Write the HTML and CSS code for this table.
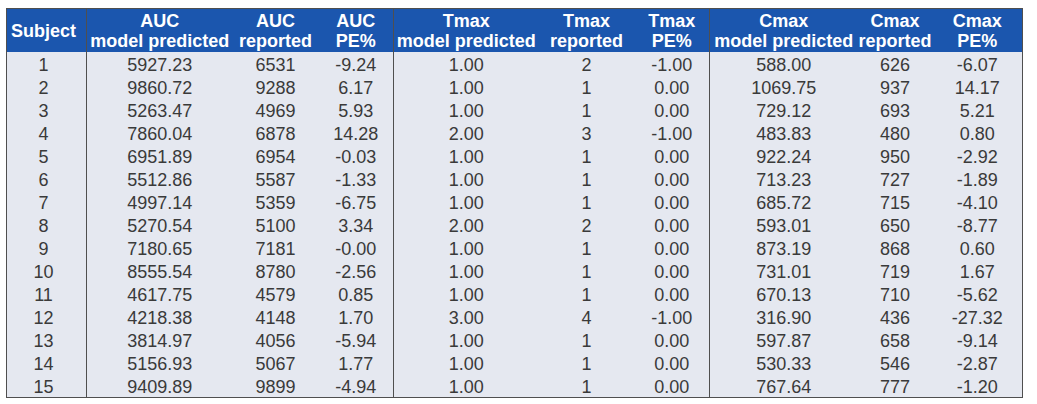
FILE: index.html
```html
<!DOCTYPE html>
<html>
<head>
<meta charset="utf-8">
<link rel="stylesheet" href="styles.css">
</head>
<body>
<table class="pk">
  <colgroup>
    <col class="c-subj">
    <col class="c-pred1">
    <col class="c-rep1">
    <col class="c-pe1">
    <col class="c-pred2">
    <col class="c-rep2">
    <col class="c-pe2">
    <col class="c-pred3">
    <col class="c-rep3">
    <col class="c-pe3">
  </colgroup>
  <thead>
    <tr>
      <th class="subj sep">Subject</th>
      <th>AUC<br>model predicted</th>
      <th>AUC<br>reported</th>
      <th class="sep">AUC<br>PE%</th>
      <th>Tmax<br>model predicted</th>
      <th>Tmax<br>reported</th>
      <th class="sep">Tmax<br>PE%</th>
      <th>Cmax<br>model predicted</th>
      <th>Cmax<br>reported</th>
      <th>Cmax<br>PE%</th>
    </tr>
  </thead>
  <tbody>
    <tr><td class="subj sep">1</td><td>5927.23</td><td>6531</td><td class="sep">-9.24</td><td>1.00</td><td>2</td><td class="sep">-1.00</td><td>588.00</td><td>626</td><td>-6.07</td></tr>
    <tr><td class="subj sep">2</td><td>9860.72</td><td>9288</td><td class="sep">6.17</td><td>1.00</td><td>1</td><td class="sep">0.00</td><td>1069.75</td><td>937</td><td>14.17</td></tr>
    <tr><td class="subj sep">3</td><td>5263.47</td><td>4969</td><td class="sep">5.93</td><td>1.00</td><td>1</td><td class="sep">0.00</td><td>729.12</td><td>693</td><td>5.21</td></tr>
    <tr><td class="subj sep">4</td><td>7860.04</td><td>6878</td><td class="sep">14.28</td><td>2.00</td><td>3</td><td class="sep">-1.00</td><td>483.83</td><td>480</td><td>0.80</td></tr>
    <tr><td class="subj sep">5</td><td>6951.89</td><td>6954</td><td class="sep">-0.03</td><td>1.00</td><td>1</td><td class="sep">0.00</td><td>922.24</td><td>950</td><td>-2.92</td></tr>
    <tr><td class="subj sep">6</td><td>5512.86</td><td>5587</td><td class="sep">-1.33</td><td>1.00</td><td>1</td><td class="sep">0.00</td><td>713.23</td><td>727</td><td>-1.89</td></tr>
    <tr><td class="subj sep">7</td><td>4997.14</td><td>5359</td><td class="sep">-6.75</td><td>1.00</td><td>1</td><td class="sep">0.00</td><td>685.72</td><td>715</td><td>-4.10</td></tr>
    <tr><td class="subj sep">8</td><td>5270.54</td><td>5100</td><td class="sep">3.34</td><td>2.00</td><td>2</td><td class="sep">0.00</td><td>593.01</td><td>650</td><td>-8.77</td></tr>
    <tr><td class="subj sep">9</td><td>7180.65</td><td>7181</td><td class="sep">-0.00</td><td>1.00</td><td>1</td><td class="sep">0.00</td><td>873.19</td><td>868</td><td>0.60</td></tr>
    <tr><td class="subj sep">10</td><td>8555.54</td><td>8780</td><td class="sep">-2.56</td><td>1.00</td><td>1</td><td class="sep">0.00</td><td>731.01</td><td>719</td><td>1.67</td></tr>
    <tr><td class="subj sep">11</td><td>4617.75</td><td>4579</td><td class="sep">0.85</td><td>1.00</td><td>1</td><td class="sep">0.00</td><td>670.13</td><td>710</td><td>-5.62</td></tr>
    <tr><td class="subj sep">12</td><td>4218.38</td><td>4148</td><td class="sep">1.70</td><td>3.00</td><td>4</td><td class="sep">-1.00</td><td>316.90</td><td>436</td><td>-27.32</td></tr>
    <tr><td class="subj sep">13</td><td>3814.97</td><td>4056</td><td class="sep">-5.94</td><td>1.00</td><td>1</td><td class="sep">0.00</td><td>597.87</td><td>658</td><td>-9.14</td></tr>
    <tr><td class="subj sep">14</td><td>5156.93</td><td>5067</td><td class="sep">1.77</td><td>1.00</td><td>1</td><td class="sep">0.00</td><td>530.33</td><td>546</td><td>-2.87</td></tr>
    <tr><td class="subj sep">15</td><td>9409.89</td><td>9899</td><td class="sep">-4.94</td><td>1.00</td><td>1</td><td class="sep">0.00</td><td>767.64</td><td>777</td><td>-1.20</td></tr>
  </tbody>
</table>
</body>
</html>
```

FILE: styles.css
```css
html, body {
  margin: 0;
  padding: 0;
  background: #ffffff;
}

body {
  padding: 8px 0 0 6px;
  font-family: "Liberation Sans", Arial, sans-serif;
}

.pk {
  border-collapse: collapse;
  table-layout: fixed;
  width: 1016px;
  border: 1px solid #4f4f4f;
  background: #e5e8f0;
  color: #3a3a3a;
  font-size: 18px;
}

.c-subj { width: 80px; }
.c-pred1 { width: 146px; }
.c-rep1 { width: 86px; }
.c-pe1 { width: 75px; }
.c-pred2 { width: 145px; }
.c-rep2 { width: 96px; }
.c-pe2 { width: 75px; }
.c-pred3 { width: 148px; }
.c-rep3 { width: 75px; }
.c-pe3 { width: 90px; }

.pk th {
  background: #1b56ae;
  color: #ffffff;
  font-weight: bold;
  line-height: 20px;
  padding: 2px 0 1px;
  text-align: center;
  white-space: nowrap;
  vertical-align: middle;
}

.pk th.subj {
  text-align: left;
  padding-left: 4px;
}

.pk td {
  text-align: center;
  line-height: 19px;
  padding: 4px 0 0;
  white-space: nowrap;
}

.pk td.subj {
  padding-right: 6px;
}

.pk .sep {
  border-right: 1px solid #4f4f4f;
}
```
